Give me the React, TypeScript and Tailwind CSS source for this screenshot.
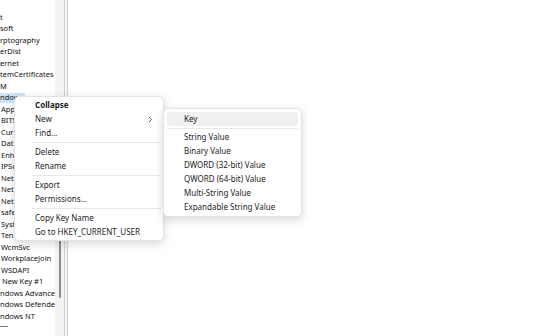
import React from 'react';

const font = { fontFamily: '"Segoe UI", "Noto Sans", "Open Sans", sans-serif' };

const treeRows: { text: string; indent?: number; selected?: boolean }[] = [
  { text: 't' },
  { text: 'soft' },
  { text: 'rptography' },
  { text: 'erDist' },
  { text: 'ernet' },
  { text: 'temCertificates' },
  { text: 'M' },
  { text: 'ndows', selected: true },
  { text: 'App', indent: 1 },
  { text: 'BITS', indent: 1 },
  { text: 'Cur', indent: 1 },
  { text: 'Dat', indent: 1 },
  { text: 'Enh', indent: 1 },
  { text: 'IPSe', indent: 1 },
  { text: 'Net', indent: 1 },
  { text: 'Net', indent: 1 },
  { text: 'Net', indent: 1 },
  { text: 'safe', indent: 1 },
  { text: 'Syst', indent: 1 },
  { text: 'Ten', indent: 1 },
  { text: 'WcmSvc', indent: 1 },
  { text: 'WorkplaceJoin', indent: 1 },
  { text: 'WSDAPI', indent: 1 },
  { text: 'New Key #1', indent: 2 },
  { text: 'ndows Advance' },
  { text: 'ndows Defender' },
  { text: 'ndows NT' },
];

type MenuItem = { label: string; bold?: boolean; arrow?: boolean; sep?: boolean; hover?: boolean };

const mainMenu: MenuItem[] = [
  { label: 'Collapse', bold: true },
  { label: 'New', arrow: true },
  { label: 'Find...' },
  { label: '', sep: true },
  { label: 'Delete' },
  { label: 'Rename' },
  { label: '', sep: true },
  { label: 'Export' },
  { label: 'Permissions...' },
  { label: '', sep: true },
  { label: 'Copy Key Name' },
  { label: 'Go to HKEY_CURRENT_USER' },
];

const subMenu: MenuItem[] = [
  { label: 'Key', hover: true },
  { label: '', sep: true },
  { label: 'String Value' },
  { label: 'Binary Value' },
  { label: 'DWORD (32-bit) Value' },
  { label: 'QWORD (64-bit) Value' },
  { label: 'Multi-String Value' },
  { label: 'Expandable String Value' },
];

function Menu({ items, sepClass }: { items: MenuItem[]; sepClass: string }) {
  return (
    <>
      {items.map((it, i) =>
        it.sep ? (
          <div key={i} className={sepClass}>
            <div className="h-px w-full bg-[#e8e8e8]" />
          </div>
        ) : (
          <div
            key={i}
            className={`mx-[3px] flex h-[14px] items-center rounded-[3px] pl-[17px] pr-[6px] ${it.hover ? 'bg-[#f0f0f0]' : ''}`}
          >
            <span className={`flex-1 whitespace-nowrap text-[8px] leading-none text-[#1c1c1c] ${it.bold ? 'font-bold' : ''}`}>
              {it.label}
            </span>
            {it.arrow && (
              <svg width="5" height="7" viewBox="0 0 5 7" className="mr-[1px]">
                <path d="M1 1 L3.5 3.5 L1 6" fill="none" stroke="#444" strokeWidth="0.9" />
              </svg>
            )}
          </div>
        )
      )}
    </>
  );
}

export default function App() {
  return (
    <div className="relative flex h-[336px] w-[560px] overflow-hidden bg-white" style={font}>
      {/* tree pane */}
      <div className="flex w-[55px] flex-col overflow-hidden bg-white pt-[11.5px]">
        {treeRows.map((r, i) => (
          <div
            key={i}
            className="flex h-[11.5px] items-center whitespace-nowrap text-[7.5px] leading-none text-[#111]"
            style={{ paddingLeft: r.indent ? r.indent : 0 }}
          >
            {r.selected ? <span className="bg-[#cce4f7] py-[1.5px] pr-[2px]">ndows</span> : r.text}
          </div>
        ))}
        <div className="mt-[4px] h-px w-[8px] bg-[#777]" />
      </div>

      {/* vertical scrollbar */}
      <div className="relative w-[9px] bg-[#f3f3f3]">
        <div className="absolute left-[4px] top-[200px] h-[98px] w-[2px] rounded-full bg-[#8a8a8a]" />
      </div>

      {/* splitter */}
      <div className="flex w-[5px]">
        <div className="w-px bg-[#d2d2d2]" />
        <div className="w-[2px] bg-[#f2f2f2]" />
        <div className="w-px bg-[#d6d6d6]" />
        <div className="w-px bg-[#fafafa]" />
      </div>

      {/* value pane */}
      <div className="flex-1 bg-white" />

      {/* context menu */}
      <div className="absolute left-[14px] top-[96px] w-[150px] rounded-[5px] border border-[#e3e3e3] bg-white py-[1px] shadow-[0_3px_10px_rgba(0,0,0,0.16)]">
        <Menu items={mainMenu} sepClass="flex h-[5px] items-center pl-[16px] pr-[2px]" />
      </div>

      {/* submenu */}
      <div className="absolute left-[163px] top-[108px] w-[139px] rounded-[5px] border border-[#e3e3e3] bg-white pb-[2px] pt-[3px] shadow-[0_3px_10px_rgba(0,0,0,0.16)]">
        <Menu items={subMenu} sepClass="flex h-[4px] items-center px-[3px]" />
      </div>
    </div>
  );
}
